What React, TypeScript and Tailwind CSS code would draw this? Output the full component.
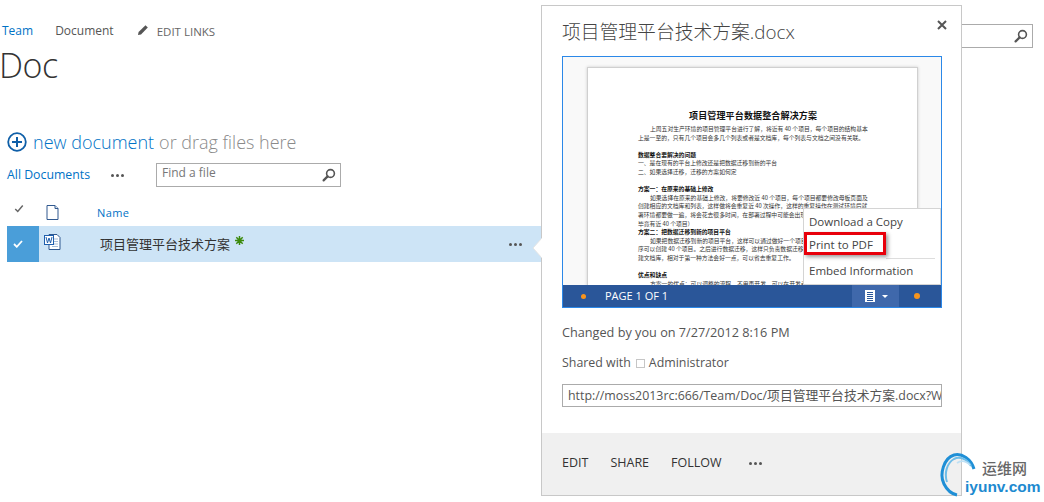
import React from "react";

const F = "font-['Open_Sans','Noto_Sans_CJK_SC',sans-serif]";

function SearchIcon({ className = "" }: { className?: string }) {
  return (
    <svg width="14" height="14" viewBox="0 0 14 14" className={className}>
      <circle cx="8.5" cy="5.5" r="3.9" fill="none" stroke="#555" strokeWidth="1.6" />
      <path d="M5.6 8.4 1.6 12.4" stroke="#555" strokeWidth="2.2" strokeLinecap="round" />
    </svg>
  );
}

function Dots({ color = "#555" }: { color?: string }) {
  return (
    <span className="flex gap-[2px]">
      {[0, 1, 2].map((i) => (
        <span key={i} className="w-[3px] h-[3px] rounded-full" style={{ background: color }} />
      ))}
    </span>
  );
}

const para = "text-[5.8px] leading-[8.6px] text-[#333] whitespace-nowrap";
const bold = "text-[5.8px] leading-[8.6px] text-[#111] font-bold whitespace-nowrap";

function PageContent() {
  return (
    <div className="flex flex-col pl-[50px] pt-[42px] font-['Noto_Sans_CJK_SC',sans-serif]">
      <div className="text-[9px] leading-[12px] font-bold text-[#111] ml-[51px] mb-[3px] whitespace-nowrap tracking-[0.15px]">项目管理平台数据整合解决方案</div>
      <div className={para + " ml-[12px]"}>上周五对生产环境的项目管理平台进行了解，将近有 40 个项目，每个项目的结构基本</div>
      <div className={para}>上是一至的，只有几个项目会多几个列表或者是文档库，每个列表与文档之间没有关联。</div>
      <div className="h-[8.6px]" />
      <div className={bold}>数据整合要解决的问题</div>
      <div className={para}>一、是在现有的平台上修改还是把数据迁移到新的平台</div>
      <div className={para}>二、如果选择迁移，迁移的方案如何定</div>
      <div className="h-[8.6px]" />
      <div className={bold}>方案一：在原来的基础上修改</div>
      <div className={para + " ml-[12px]"}>如果选择在原来的基础上修改，将要修改近 40 个项目，每个项目都要修改母板页面及</div>
      <div className={para}>创建相应的文档库和列表，这样做将会重复近 40 次操作，这样的重复操作在测试环境后就</div>
      <div className={para}>署环境都要做一遍，将会花去很多时间，在部署过程中可能会出现一些错误，修改</div>
      <div className={para}>毕竟有近 40 个项目）</div>
      <div className={bold}>方案二：把数据迁移到新的项目平台</div>
      <div className={para + " ml-[12px]"}>如果把数据迁移到新的项目平台，这样可以通过做好一个项目模板</div>
      <div className={para}>序可以创建 40 个项目。之后进行数据迁移，这样只负责数据迁移</div>
      <div className={para}>建文档库，相对于第一种方法会好一点，可以省去重复工作。</div>
      <div className="h-[8.6px]" />
      <div className={bold}>优点和缺点</div>
      <div className={para + " ml-[12px]"}>方案一的优点：可以调整的流程，不用再开发，可以在开发考虑</div>
    </div>
  );
}

function Preview() {
  return (
    <div className="relative h-[252px] w-[380px] border border-[#2b88e8] bg-[#f9f9f9] overflow-hidden flex flex-col shrink-0">
      <div className="flex-1 overflow-hidden pl-[24px] pt-[10px]">
        <div className="h-[300px] w-[331px] bg-white border border-[#d0d0d0] shadow-[0_0_3px_#ccc] overflow-hidden">
          <PageContent />
        </div>
      </div>
      <div className="h-[22px] bg-[#2a5699] flex items-center text-white text-[11px] shrink-0">
        <span className="w-[5px] h-[5px] rounded-full bg-[#f7941d] ml-[18px]" />
        <span className="ml-[19px]">PAGE 1 OF 1</span>
        <div className="ml-auto h-full w-[47px] bg-[#3f68ab] flex items-center justify-center gap-[6px]">
          <svg width="12" height="12" viewBox="0 0 12 12">
            <rect x="1" y="0" width="10" height="12" fill="#fff" />
            <path d="M3 2.5h6M3 4.5h6M3 6.5h6M3 8.5h6M3 10.5h6" stroke="#2a5699" strokeWidth="1" />
          </svg>
          <span className="w-0 h-0 border-x-[3px] border-x-transparent border-t-[3px] border-t-white" />
        </div>
        <span className="w-[6px] h-[6px] rounded-full bg-[#f7941d] ml-[15px] mr-[21px]" />
      </div>
      <div className="absolute left-[240px] top-[151px] w-[138px] h-[77px] bg-white border border-[#d4d4d4] text-[11.5px] text-[#444] pl-[5px] overflow-hidden">
        <div className="h-[24px] pt-[4px] leading-[18px]">Download a Copy</div>
        <div className="relative h-[25px] pt-[3px] leading-[18px]">
          Print to PDF
          <div className="absolute left-[-5px] top-[-1px] w-[82px] h-[23px] border-[3px] border-[#e8000b] shadow-[2px_2px_4px_rgba(0,0,0,0.4)]" />
        </div>
        <div className="h-px bg-[#ddd] ml-[77px] mr-[5px]" />
        <div className="pt-[3px] leading-[18px]">Embed Information</div>
      </div>
    </div>
  );
}

function Panel() {
  return (
    <div className="absolute left-[541px] top-[5px] w-[421px] h-[491px] bg-white border border-[#c8c8c8] flex flex-col">
      <svg width="10" height="20" viewBox="0 0 10 20" className="absolute left-[-10px] top-[232px]">
        <path d="M10 0 1 10 10 20z" fill="#fff" />
        <path d="M10 0 1 10 10 20" fill="none" stroke="#e4e4e4" />
      </svg>
      <div className="absolute left-[-1px] top-[233px] w-px h-[18px] bg-white" />
      <div className="pl-[20px] pr-[19px] flex-1 flex flex-col min-h-0">
        <div className="h-[50px] flex items-center justify-between pt-[2px]">
          <span className="text-[18.8px] text-[#444] whitespace-nowrap font-light">项目管理平台技术方案.docx</span>
          <svg width="10" height="10" viewBox="0 0 10 10" className="mb-[15px] mr-[-5px]">
            <path d="M1 1 9 9M9 1 1 9" stroke="#555" strokeWidth="2" />
          </svg>
        </div>
        <Preview />
        <div className="text-[12.7px] text-[#555] mt-[15px] leading-[18px]">Changed by you on 7/27/2012 8:16 PM</div>
        <div className="text-[12.4px] text-[#555] mt-[13px] leading-[18px] flex items-center">
          <span>Shared with</span>
          <span className="w-[9px] h-[9px] border border-[#c6c6c6] ml-[5px] mr-[4px] mt-[1px]" />
          <span>Administrator</span>
        </div>
        <div className="mt-[12px] h-[23px] w-[380px] border border-[#ababab] text-[12.4px] text-[#555] pl-[5px] leading-[21px] overflow-hidden whitespace-nowrap">
          http://moss2013rc:666/Team/Doc/<span className="text-[12.8px]">项目管理平台技术方案</span>.docx?Web=1
        </div>
      </div>
      <div className="h-[62px] bg-[#f0f0f0] flex items-center pl-[20px] pb-[1px] text-[12.5px] text-[#333] shrink-0">
        <span>EDIT</span>
        <span className="ml-[22px]">SHARE</span>
        <span className="ml-[22px]">FOLLOW</span>
        <span className="ml-[27px]"><Dots /></span>
      </div>
    </div>
  );
}

function Watermark() {
  return (
    <div className="absolute left-[940px] top-[452px] w-[104px] h-[46px]">
      <svg width="40" height="46" viewBox="0 0 40 46" className="absolute left-0 top-0">
        <path d="M34 17C31 7 22 1 14 3 4 6-1 22 4 32c3 6 8 10 13 11" fill="none" stroke="#1f8fd6" strokeWidth="3" />
        <path d="M31 14C27 7 20 4 14 7 7 11 4 21 7 30" fill="none" stroke="#6fbde8" strokeWidth="2" />
        <path d="M30 13C26 9 21 8 17 11" fill="none" stroke="#bfe0f4" strokeWidth="1.6" />
      </svg>
      <span className="absolute left-[42px] top-[7px] text-[15px] leading-[18px] text-[#666] font-medium font-['Noto_Sans_CJK_SC',sans-serif]">运维网</span>
      <span className="absolute left-[25px] top-[26px] text-[15.5px] leading-[18px] font-bold text-[#1d8ad0] font-['Liberation_Sans',sans-serif]">iyunv.com</span>
    </div>
  );
}

function WordIcon() {
  return (
    <svg width="17" height="16" viewBox="0 0 17 16">
      <path d="M5 .5h8l3 3v12H5z" fill="#fff" stroke="#31598f" />
      <path d="M8 5h6M8 7.5h6M8 10h6M8 12.5h6" stroke="#a9bfd9" />
      <rect x="0" y="1" width="10" height="10" fill="#1f5fae" />
      <rect x="1" y="2" width="8" height="8" fill="#fff" />
      <path d="M2 3l1.5 6 1.5-5 1.5 5L8 3" fill="none" stroke="#1f5fae" strokeWidth="1" />
    </svg>
  );
}

function Spark() {
  return (
    <svg width="9" height="9" viewBox="0 0 9 9">
      <path d="M4.5 0v9M0 4.5h9M1.3 1.3l6.4 6.4M7.7 1.3 1.3 7.7" stroke="#3c8a0c" strokeWidth="1.5" />
    </svg>
  );
}

export default function App() {
  return (
    <div className={"relative w-[1044px] h-[502px] bg-white overflow-hidden " + F}>
      <div className="pl-[2px] pt-[23px] h-[43px] flex items-start text-[12px] leading-[16px]">
        <span className="text-[#0072c6]">Team</span>
        <span className="text-[#555] ml-[22px]">Document</span>
        <svg width="12" height="12" viewBox="0 0 12 12" className="ml-[23px] mt-[1px]">
          <path d="M1 11 1.6 8 8.5 1.2l2.3 2.3L4 10.4z" fill="#555" />
        </svg>
        <span className="text-[#666] ml-[8px] mt-[1px] text-[11.5px]">EDIT LINKS</span>
      </div>
      <div className="text-[34px] leading-[44px] text-[#333] font-light tracking-[-0.5px] -ml-px">Doc</div>

      <div className="flex items-center ml-[7px] mt-[40px] h-[30px] text-[18px] font-light">
        <svg width="20" height="20" viewBox="0 0 20 20" className="mr-[6px]">
          <circle cx="10" cy="10" r="8.8" fill="none" stroke="#0f5fa8" strokeWidth="1.8" />
          <path d="M10 5v10M5 10h10" stroke="#0f5fa8" strokeWidth="2" />
        </svg>
        <span className="text-[#0072c6]">new document</span>
        <span className="text-[#8a8a8a] ml-[5px]">or drag files here</span>
      </div>

      <div className="flex items-center ml-[7px] mt-[6px] h-[24px]">
        <span className="text-[12.3px] text-[#0072c6] w-[104px]">All Documents</span>
        <span className="w-[45px]"><Dots /></span>
        <div className="w-[185px] h-[24px] border border-[#ababab] flex items-center justify-between pl-[5px] pr-[4px] text-[12px] text-[#777] pb-[4px]">
          <span>Find a file</span>
          <SearchIcon className="mt-[4px]" />
        </div>
      </div>

      <div className="flex items-center ml-[7px] mt-[13px] h-[26px]">
        <svg width="10" height="9" viewBox="0 0 12 10" className="ml-[7px] mb-[10px]">
          <path d="M1.5 5.5 4.5 8.5 10.5 1.5" fill="none" stroke="#666" strokeWidth="1.8" />
        </svg>
        <svg width="13" height="15" viewBox="0 0 13 15" className="ml-[22px] mb-[2px]">
          <path d="M1 .5h8l3 3v11H1z" fill="#fff" stroke="#31598f" />
          <path d="M9 .5v3h3" fill="#dfe7f1" stroke="#31598f" />
        </svg>
        <span className="ml-[38px] text-[11px] text-[#0072c6] tracking-[0.4px]">Name</span>
      </div>

      <div className="flex h-[36px] ml-[7px] w-[534px] bg-[#cde4f6] items-center">
        <div className="w-[32px] h-full bg-[#4a9ed9] flex items-center pl-[6px] shrink-0">
          <svg width="10" height="8" viewBox="0 0 10 8">
            <path d="M1 4 3.8 6.8 9 1" fill="none" stroke="#fff" strokeWidth="1.8" />
          </svg>
        </div>
        <div className="ml-[5px] mb-[5px]"><WordIcon /></div>
        <span className="ml-[39px] pt-[2px] text-[13px] text-[#333] whitespace-nowrap">项目管理平台技术方案</span>
        <span className="ml-[5px] mb-[8px] flex"><Spark /></span>
        <span className="ml-auto mr-[19px]"><Dots /></span>
      </div>

      <div className="absolute left-[962px] top-[24px] w-[71px] h-[24px] border border-l-0 border-[#ababab] flex items-center justify-end pr-[4px]">
        <SearchIcon />
      </div>
      <Panel />
      <Watermark />
    </div>
  );
}
